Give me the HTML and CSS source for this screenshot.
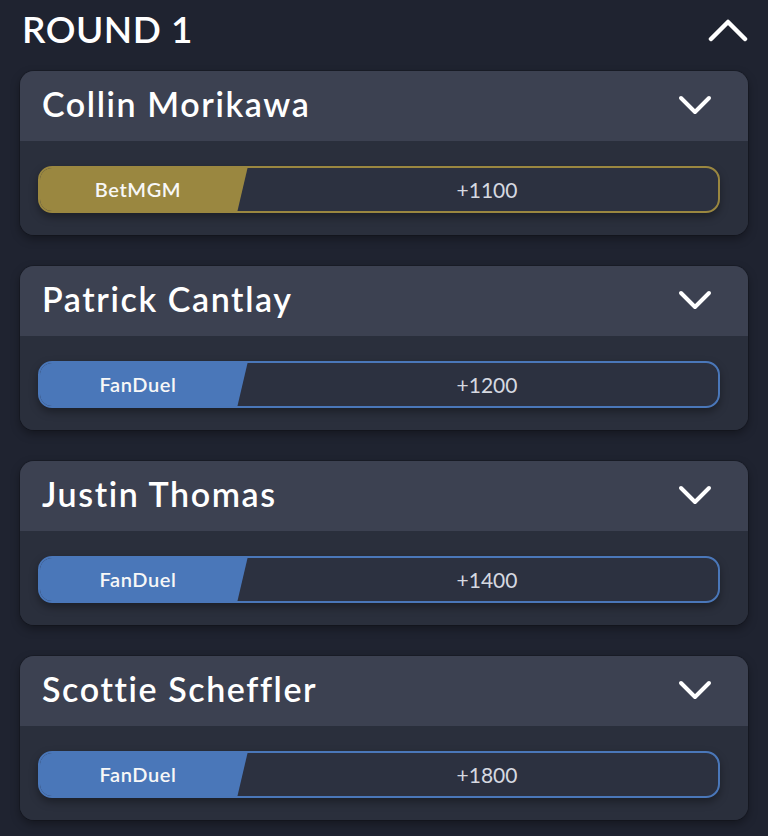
FILE: index.html
```html
<!DOCTYPE html>
<html>
<head>
<meta charset="utf-8">
<link rel="stylesheet" href="styles.css">
</head>
<body>
<div class="page">
  <div class="round-head">
    <h1 class="round-title">ROUND 1</h1>
    <svg class="chev-up" viewBox="0 0 40 24" width="40" height="24"><path d="M3 21 L20 4 L37 21" fill="none" stroke="#fff" stroke-width="4.5" stroke-linecap="round" stroke-linejoin="round"/></svg>
  </div>

  <div class="card">
    <div class="card-head">
      <span class="player">Collin Morikawa</span>
      <svg class="chev" viewBox="0 0 34 20" width="34" height="20"><path d="M3 3 L17 17 L31 3" fill="none" stroke="#fff" stroke-width="4" stroke-linecap="round" stroke-linejoin="round"/></svg>
    </div>
    <div class="card-body">
      <div class="odds gold">
        <div class="book"><span>BetMGM</span></div>
        <div class="price">+1100</div>
      </div>
    </div>
  </div>

  <div class="card">
    <div class="card-head">
      <span class="player">Patrick Cantlay</span>
      <svg class="chev" viewBox="0 0 34 20" width="34" height="20"><path d="M3 3 L17 17 L31 3" fill="none" stroke="#fff" stroke-width="4" stroke-linecap="round" stroke-linejoin="round"/></svg>
    </div>
    <div class="card-body">
      <div class="odds blue">
        <div class="book"><span>FanDuel</span></div>
        <div class="price">+1200</div>
      </div>
    </div>
  </div>

  <div class="card">
    <div class="card-head">
      <span class="player">Justin Thomas</span>
      <svg class="chev" viewBox="0 0 34 20" width="34" height="20"><path d="M3 3 L17 17 L31 3" fill="none" stroke="#fff" stroke-width="4" stroke-linecap="round" stroke-linejoin="round"/></svg>
    </div>
    <div class="card-body">
      <div class="odds blue">
        <div class="book"><span>FanDuel</span></div>
        <div class="price">+1400</div>
      </div>
    </div>
  </div>

  <div class="card">
    <div class="card-head">
      <span class="player">Scottie Scheffler</span>
      <svg class="chev" viewBox="0 0 34 20" width="34" height="20"><path d="M3 3 L17 17 L31 3" fill="none" stroke="#fff" stroke-width="4" stroke-linecap="round" stroke-linejoin="round"/></svg>
    </div>
    <div class="card-body">
      <div class="odds blue">
        <div class="book"><span>FanDuel</span></div>
        <div class="price">+1800</div>
      </div>
    </div>
  </div>
</div>
</body>
</html>
```

FILE: styles.css
```css
html, body {
  margin: 0;
  padding: 0;
  background: #1f2330;
}
body {
  font-family: "Lato", "Noto Sans", sans-serif;
  color: #fff;
}
.page {
  padding: 0 20px;
}
.round-head {
  height: 71px;
  display: flex;
  align-items: center;
  justify-content: space-between;
  padding-left: 2px;
}
.round-title {
  margin: 0;
  font-size: 37px;
  font-weight: 600;
  letter-spacing: 0.5px;
  color: #fff;
  line-height: 1;
  margin-top: -14px;
}
.chev-up {
  margin-top: -12px;
}
.card {
  border-radius: 14px;
  overflow: hidden;
  margin-bottom: 31px;
  box-shadow: 0 4px 10px rgba(0, 0, 0, 0.35), 0 0 0 1px rgba(0, 0, 0, 0.15);
  background: #2a2f3c;
}
.card-head {
  height: 70px;
  background: #3c4151;
  display: flex;
  align-items: center;
  justify-content: space-between;
  padding: 0 36px 0 22px;
}
.player {
  font-size: 34px;
  font-weight: 600;
  letter-spacing: 1.6px;
  margin-top: -5px;
}
.chev {
  margin-top: -2px;
}
.card-body {
  padding: 25px 28px 22px 18px;
  background: #2a2f3c;
}
.odds {
  height: 47px;
  box-sizing: border-box;
  border: 2px solid;
  border-radius: 14px;
  overflow: hidden;
  display: flex;
  background: #2c3140;
  box-shadow: 0 4px 8px rgba(0, 0, 0, 0.35);
}
.odds.gold { border-color: #9a8740; }
.odds.blue { border-color: #4a77b9; }
.book {
  width: 210px;
  flex: none;
  display: flex;
  align-items: center;
  justify-content: center;
  clip-path: polygon(0 0, 100% 0, calc(100% - 11px) 100%, 0 100%);
  font-size: 20px;
  font-weight: 600;
  letter-spacing: 0.6px;
  color: #f7f7f7;
  margin: -2px 0 -2px -2px;
  padding-right: 10px;
  box-sizing: border-box;
}
.book span { margin-top: -1px; }
.gold .book { background: #9a8740; }
.blue .book { background: #4a77b9; }
.price {
  flex: 1;
  display: flex;
  align-items: center;
  justify-content: center;
  font-size: 21px;
  font-weight: 400;
  color: #d6d9e0;
  padding-left: 8px;
}
```
